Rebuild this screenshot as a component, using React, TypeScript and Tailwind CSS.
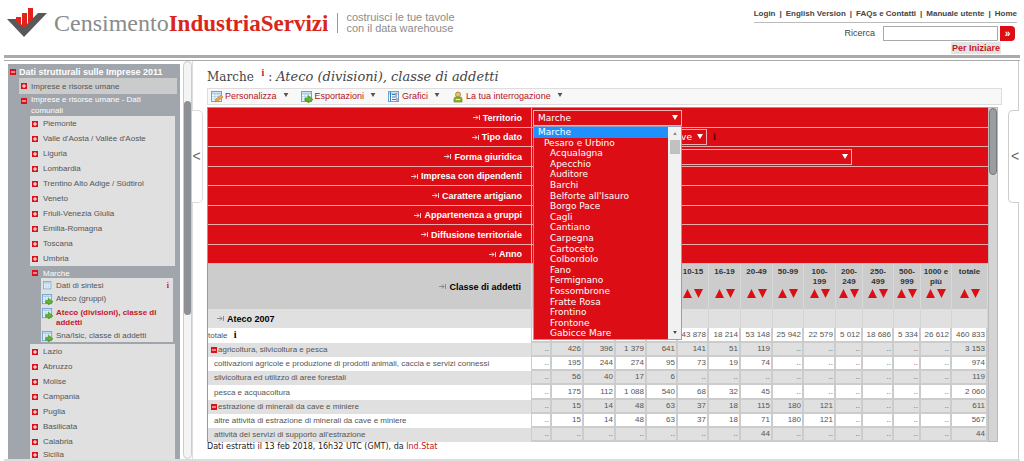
import type { ReactNode } from 'react'

const topLinks = ['Login', 'English Version', 'FAQs e Contatti', 'Manuale utente', 'Home']

const regionsBefore = [
  'Piemonte',
  "Valle d'Aosta / Vallée d'Aoste",
  'Liguria',
  'Lombardia',
  'Trentino Alto Adige / Südtirol',
  'Veneto',
  'Friuli-Venezia Giulia',
  'Emilia-Romagna',
  'Toscana',
  'Umbria',
]

const regionsAfter = ['Lazio', 'Abruzzo', 'Molise', 'Campania', 'Puglia', 'Basilicata', 'Calabria', 'Sicilia']

const municipalities = [
  'Acqualagna',
  'Apecchio',
  'Auditore',
  'Barchi',
  "Belforte all'Isauro",
  'Borgo Pace',
  'Cagli',
  'Cantiano',
  'Carpegna',
  'Cartoceto',
  'Colbordolo',
  'Fano',
  'Fermignano',
  'Fossombrone',
  'Fratte Rosa',
  'Frontino',
  'Frontone',
  'Gabicce Mare',
]

const otherFilters = ['Impresa con dipendenti', 'Carattere artigiano', 'Appartenenza a gruppi', 'Diffusione territoriale', 'Anno']

const sizeClasses = ['', '', '', '', '', '10-15', '16-19', '20-49', '50-99', '100-199', '200-249', '250-499', '500-999', '1000 e più', 'totale']

const rows = [
  {
    label: 'agricoltura, silvicoltura e pesca',
    group: true,
    values: ['..', '426', '396', '1 379', '641', '141', '51', '119', '..', '..', '..', '..', '..', '..', '3 153'],
  },
  {
    label: 'coltivazioni agricole e produzione di prodotti animali, caccia e servizi connessi',
    values: ['..', '195', '244', '274', '95', '73', '19', '74', '..', '..', '..', '..', '..', '..', '974'],
  },
  {
    label: 'silvicoltura ed utilizzo di aree forestali',
    values: ['..', '56', '40', '17', '6', '..', '..', '..', '..', '..', '..', '..', '..', '..', '119'],
  },
  {
    label: 'pesca e acquacoltura',
    values: ['..', '175', '112', '1 088', '540', '68', '32', '45', '..', '..', '..', '..', '..', '..', '2 060'],
  },
  {
    label: 'estrazione di minerali da cave e miniere',
    group: true,
    values: ['..', '15', '14', '48', '63', '37', '18', '115', '180', '121', '..', '..', '..', '..', '611'],
  },
  {
    label: 'altre attività di estrazione di minerali da cave e miniere',
    values: ['..', '15', '14', '48', '63', '37', '18', '71', '180', '121', '..', '..', '..', '..', '567'],
  },
  {
    label: "attività dei servizi di supporto all'estrazione",
    values: ['..', '..', '..', '..', '..', '..', '..', '44', '..', '..', '..', '..', '..', '..', '44'],
  },
]

const totals = ['', '', '', '', '', '43 878', '18 214', '53 148', '25 942', '22 579', '5 012', '18 686', '5 334', '26 612', '460 833']

function Toggle({ open = false }: { open?: boolean }) {
  return (
    <svg viewBox="0 0 6 6" className="h-[6px] w-[6px] shrink-0">
      <rect width="6" height="6" fill="#d8131c" />
      <path d={open ? 'M1 3h4' : 'M1 3h4M3 1v4'} stroke="#fff" strokeWidth="1" />
    </svg>
  )
}

function TableIcon({ kind }: { kind: 'plain' | 'arrow' | 'edit' | 'chart' }) {
  return (
    <svg viewBox="0 0 12 12" className="h-full w-full">
      <rect x="0.5" y="0.5" width="10" height="10" fill="#f2f9fd" stroke="#6fa3cd" />
      <path d="M1 2.5h9" stroke="#a9cfe9" strokeWidth="2" />
      {kind !== 'chart' && <path d="M1 5.5h9M1 8h9M4 2v8M7 2v8" stroke="#a8cbe4" strokeWidth="0.7" />}
      {kind === 'arrow' && <path d="M4 7h3V4.500l5 4-5 3.500V10H4z" fill="#63b52c" stroke="#37801a" strokeWidth="0.6" />}
      {kind === 'edit' && <path d="M4 11l1-3 5-4 2 2-5 4z" fill="#f0a848" stroke="#b47a35" strokeWidth="0.6" />}
      {kind === 'chart' && (
        <>
          <path d="M2.500 1v9" stroke="#337db5" strokeWidth="1" />
          <path d="M4 3.500h3M4 6h5M4 8.500h4" stroke="#337db5" strokeWidth="1.200" />
          <path d="M8 2v3M9 7v3" stroke="#d8434a" strokeWidth="1" />
        </>
      )}
    </svg>
  )
}

function UserIcon() {
  return (
    <svg viewBox="0 0 10 12" className="h-full w-full">
      <path d="M1 11V8q0-2 2-2h4q2 0 2 2v3z" fill="#8cb52c" stroke="#64851d" strokeWidth="0.7" />
      <circle cx="5" cy="3.500" r="2.500" fill="#e9bf70" stroke="#93702d" strokeWidth="0.7" />
      <path d="M3 8.500h4" stroke="#e5f0b9" strokeWidth="1" />
    </svg>
  )
}

function DimIcon({ dark = false }: { dark?: boolean }) {
  return (
    <svg viewBox="0 0 7 5" className={`h-[5px] w-[7px] ${dark ? 'text-[#777]' : 'text-white'}`}>
      <path d="M0 2.500h5M3 0.500l2 2-2 2M6.500 0v5" fill="none" stroke="currentColor" strokeWidth="0.800" />
    </svg>
  )
}

function SortArrows() {
  return (
    <svg viewBox="0 0 20 9" className="mx-auto h-[9px] w-[20px]">
      <path d="M0 9h9L4.500 0z" fill="#dc0d15" />
      <path d="M11 0h9l-4.500 9z" fill="#dc0d15" />
    </svg>
  )
}

function Down({ className }: { className: string }) {
  return (
    <svg viewBox="0 0 6 5" className={className}>
      <path d="M0 0h6L3 5z" fill="currentColor" />
    </svg>
  )
}

function Region({ name }: { name: string }) {
  return (
    <li className="flex h-[15px] items-center gap-[5px] bg-[#e0e0e0] pl-[2px] last:h-[12px] last:leading-[8px]">
      <Toggle />
      <a href="#" className="whitespace-nowrap">{name}</a>
    </li>
  )
}

function TreeLeaf({ kind, active = false, children }: { kind: 'plain' | 'arrow'; active?: boolean; children: ReactNode }) {
  return (
    <li className="flex gap-[3px] pl-[1px]">
      <span className={kind === 'plain' ? 'ml-px mr-px h-[9px] w-[9px] shrink-0' : 'h-[11px] w-[11px] shrink-0'}>
        <TableIcon kind={kind} />
      </span>
      <a href="#" className={`flex-1 leading-[10px] ${active ? 'font-bold text-[#c4161e]' : ''}`}>{children}</a>
    </li>
  )
}

function Sidebar() {
  return (
    <nav className="ml-2 mt-[3px] w-[172px] shrink-0 overflow-hidden bg-[#a0a6ab] text-[8px] leading-[11px] text-[#555]">
      <div className="flex h-[14px] items-center gap-[3px] pl-[2px] pt-[2px] text-[9px] font-bold text-white">
        <Toggle open />
        <a href="#" className="whitespace-nowrap">Dati strutturali sulle Imprese 2011</a>
      </div>
      <div className="ml-[11px] mr-[3px] flex h-[16px] items-center gap-1 bg-[#cacbcb] pl-[2px]">
        <Toggle />
        <a href="#">Imprese e risorse umane</a>
      </div>
      <div className="ml-[13px] flex h-[22px] gap-1 text-white">
        <span className="flex pt-1">
          <Toggle open />
        </span>
        <a href="#" className="mr-[30px] leading-[11px]">Imprese e risorse umane - Dati comunali</a>
      </div>
      <ul className="ml-[22px] mr-[5px]">
        {regionsBefore.map((name) => (
          <Region key={name} name={name} />
        ))}
        <li>
          <div className="flex h-[12px] items-center gap-[5px] pl-[2px] pt-[2px] text-white">
            <Toggle open />
            <a href="#">Marche</a>
          </div>
          <ul className="mb-[2px] ml-[11px] mr-[2px] flex h-[64px] flex-col gap-[3px] bg-[#e0e0e0] pt-[2px]">
            <li className="flex items-center pr-1">
              <ul className="flex-1">
                <TreeLeaf kind="plain">Dati di sintesi</TreeLeaf>
              </ul>
              <b className="font-['Liberation_Serif',serif] text-[#c4161e]">i</b>
            </li>
            <TreeLeaf kind="arrow">Ateco (gruppi)</TreeLeaf>
            <TreeLeaf kind="arrow" active>Ateco (divisioni), classe di addetti</TreeLeaf>
            <TreeLeaf kind="arrow">Sna/Isic, classe di addetti</TreeLeaf>
          </ul>
        </li>
        {regionsAfter.map((name) => (
          <Region key={name} name={name} />
        ))}
      </ul>
    </nav>
  )
}

function Header() {
  return (
    <header className="mx-1 flex h-[61px] shrink-0 items-start justify-between border-b border-[#aaa]">
      <div className="flex h-[60px] flex-1 items-start justify-between border-b border-white">
        <div className="flex h-[58px] flex-1 items-start justify-between border-b-[3px] border-[#aaa]">
          <div className="flex pt-[7px]">
            <svg viewBox="0 0 40 31" className="ml-[3px] h-[31px] w-[40px]">
              <path d="M0 12h9l8 8L31 6h9L17 30z" fill="#58585a" />
              <path d="M9 10h5v9l-5-5zM15 6h5v12l-3 3-2-2zM21 1h5v11l-5 5z" fill="#e2231a" />
            </svg>
            <div className="ml-[7px] mt-[1px] whitespace-nowrap font-['Liberation_Serif',serif] text-[24px] leading-[30px] text-[#8b8b8b]">
              Censimento<b className="text-[23px] text-[#d9261c]">IndustriaServizi</b>
            </div>
            <div className="ml-[9px] mt-[6px] h-[20px] border-l border-[#999]" />
            <p className="ml-[8px] mt-[5px] whitespace-nowrap text-[11px] leading-[11px] text-[#8d8d8d]">
              costruisci le tue tavole
              <br />
              con il data warehouse
            </p>
          </div>
          <div className="mr-[3px] flex flex-col items-end pt-[8px] text-[#444]">
            <div className="flex border-b border-[#bbb] pb-[2px] text-[8px] font-bold leading-[12px]">
              {topLinks.map((link, i) => (
                <span key={link} className="whitespace-nowrap">
                  {i > 0 && <span className="px-[4px]">|</span>}
                  <a href="#">{link}</a>
                </span>
              ))}
            </div>
            <form className="mt-[3px] flex h-[15px] items-center">
              <label htmlFor="search" className="mr-2 text-[9px]">Ricerca</label>
              <input id="search" className="h-[15px] w-[115px] border border-[#aaa] bg-white px-1 text-[9px]" />
              <button type="button" className="ml-[2px] mr-[2px] h-[15px] w-[15px] rounded-r-[4px] bg-[#dc0d15] text-[10px] font-bold leading-[12px] text-white">»</button>
            </form>
            <a href="#" className="mr-4 mt-px h-[12px] bg-[#e4e4e4] px-px text-[9px] font-bold leading-[12px] text-[#c4161e]">Per Iniziare</a>
          </div>
        </div>
      </div>
    </header>
  )
}

function ToolbarButton({ label, icon }: { label: string; icon: ReactNode }) {
  return (
    <button type="button" className="flex items-center gap-[2px] whitespace-nowrap">
      <span className="h-[12px] w-[12px]">{icon}</span>
      {label}
      <Down className="mb-1 ml-1 h-[4px] w-[6px] text-[#555]" />
    </button>
  )
}

function FilterSelect({ id, value, className, alignEnd = false }: { id: string; value: string; className: string; alignEnd?: boolean }) {
  return (
    <div className={`relative ${className}`}>
      <select
        id={id}
        className={`block h-[16px] w-full appearance-none border border-[#f3b0b2] bg-[#dc0d15] pl-1 pr-[14px] font-['DejaVu_Sans',sans-serif] text-[9px] leading-[14px] text-white ${alignEnd ? '[text-align-last:right]' : ''}`}
      >
        <option>{value}</option>
      </select>
      <Down className="pointer-events-none absolute right-1 top-[5px] h-[5px] w-[6px] text-white" />
    </div>
  )
}

function TerritoryList() {
  return (
    <div className="absolute left-px top-[18px] z-10 flex h-[214px] w-[149px] border border-[#8f9fc4] bg-[#dc0d15] font-['DejaVu_Sans',sans-serif] text-[9px] leading-[10px] text-white">
      <ul role="listbox" aria-label="Territorio" className="grid flex-1 auto-rows-fr whitespace-nowrap">
        <li role="option" aria-selected="true" className="bg-[#1e90ff] pl-1">Marche</li>
        <li role="option" aria-selected="false" className="pl-[10px]">Pesaro e Urbino</li>
        {municipalities.map((name) => (
          <li key={name} role="option" aria-selected="false" className="pl-4">{name}</li>
        ))}
      </ul>
      <div className="flex w-[13px] flex-col items-center bg-[#f1f1f1] py-[5px] text-[#8a8a8a]">
        <Down className="h-[3px] w-[6px] rotate-180" />
        <div className="mt-[5px] h-[14px] w-[10px] bg-[#c1c1c1]" />
        <Down className="mt-auto h-[3px] w-[6px] text-[#444]" />
      </div>
    </div>
  )
}

function FilterRow({ label, htmlFor, tall, children }: { label: string; htmlFor?: string; tall: boolean; children?: ReactNode }) {
  return (
    <tr className={`bg-[#dc0d15] text-white ${tall ? 'h-[20px]' : 'h-[19px]'}`}>
      <th scope="row" className="border-b border-r border-[#efaaaa] pr-[9px] text-[9px] leading-[12px]">
        <label htmlFor={htmlFor} className="flex items-center justify-end gap-[3px]">
          <DimIcon />
          {label}
        </label>
      </th>
      <td colSpan={15} className="relative border-b border-[#efaaaa] text-left">
        {children}
      </td>
    </tr>
  )
}

function DataTable() {
  return (
    <table className="w-full table-fixed border-separate border-spacing-0 border-l border-t border-[#999] text-[8px] leading-[10px] text-[#555]">
      <colgroup>
        <col />
        <col className="w-[20px]" />
        <col className="w-[32px]" />
        <col className="w-[32px]" />
        <col className="w-[31px]" />
        <col className="w-[31px]" />
        <col className="w-[31px]" />
        <col className="w-[32px]" />
        <col className="w-[32px]" />
        <col className="w-[31px]" />
        <col className="w-[32px]" />
        <col className="w-[27px]" />
        <col className="w-[31px]" />
        <col className="w-[27px]" />
        <col className="w-[31px]" />
        <col className="w-[36px]" />
      </colgroup>
      <thead>
        <FilterRow label="Territorio" htmlFor="territorio" tall>
          <FilterSelect id="territorio" value="Marche" className="ml-px w-[149px]" />
          <TerritoryList />
        </FilterRow>
        <FilterRow label="Tipo dato" htmlFor="tipo" tall={false}>
          <div className="flex items-center">
            <FilterSelect id="tipo" value="numero imprese attive" className="ml-px w-[174px]" alignEnd />
            <b className="ml-[6px] font-['Liberation_Serif',serif] text-[10px] text-[#4b0507]">i</b>
          </div>
        </FilterRow>
        <FilterRow label="Forma giuridica" htmlFor="forma" tall>
          <FilterSelect id="forma" value="totale" className="ml-px w-[319px]" />
        </FilterRow>
        {otherFilters.map((label, i) => (
          <FilterRow key={label} label={label} tall={i % 2 === 1} />
        ))}
        <tr className="h-[45px] bg-[#ccc] text-[#333]">
          <th scope="col" className="border-r border-[#ddd] pr-[10px] text-[9px] text-black">
            <span className="flex items-center justify-end gap-[3px]">
              <DimIcon dark />
              Classe di addetti
            </span>
          </th>
          {sizeClasses.map((label, i) => (
            <th key={i} scope="col" className="border-r border-[#d8d8d8] pt-[3px] align-top leading-[10px]">
              <div className="h-[22px] px-[2px]">{label}</div>
              {label && <SortArrows />}
            </th>
          ))}
        </tr>
        <tr className="h-[19px] bg-[#e0e0e0]">
          <th scope="col" className="border-r border-[#d0d0d0] pl-[9px] text-[9px] text-black">
            <span className="flex items-center gap-[3px]">
              <DimIcon dark />
              Ateco 2007
            </span>
          </th>
          {sizeClasses.map((_, i) => (
            <td key={i} className="border-r border-[#d4d4d4]" />
          ))}
        </tr>
      </thead>
      <tbody>
        <tr className="h-[15px] bg-white">
          <th scope="row" className="border-r border-[#ccc] text-left font-normal">
            totale <b className="ml-1 font-['Liberation_Serif',serif] text-[10px] text-black">i</b>
          </th>
          {totals.map((value, i) => (
            <td key={i} className="whitespace-nowrap border-b-2 border-r-2 border-[#ccc] pr-px text-right">{value}</td>
          ))}
        </tr>
        {rows.map((row, i) => (
          <tr key={row.label} className={`${i === 3 ? 'h-[15px]' : 'h-[14px]'} ${i % 2 ? 'bg-white' : 'bg-[#e0e0e0]'}`}>
            <th scope="row" className="border-r border-[#ccc] text-left font-normal">
              <span className={`flex items-center gap-px whitespace-nowrap ${row.group ? 'pl-[3px]' : 'pl-[6px]'}`}>
                {row.group && <Toggle open />}
                {row.label}
              </span>
            </th>
            {row.values.map((value, j) => (
              <td key={j} className="whitespace-nowrap border-b-2 border-r-2 border-[#ccc] pr-px text-right">{value}</td>
            ))}
          </tr>
        ))}
      </tbody>
    </table>
  )
}

export default function App() {
  return (
    <div className="flex h-screen flex-col overflow-hidden bg-white font-['Liberation_Sans',Arial,sans-serif]">
      <Header />

      <div className="mx-1 flex min-h-0 flex-1 border-b-2 border-[#ddd] pr-px">
        <div className="-ml-1 flex">
          <Sidebar />
        </div>
        <div className="ml-[3px] w-[9px] shrink-0 rounded-[5px] border border-[#ccc] bg-[#f4f4f4] pt-[39px]">
          <div className="h-[214px] rounded-[5px] bg-[#8d9195]" />
        </div>

        <div className="w-[10px] shrink-0 border-l border-[#ddd] pt-[49px]">
          <button type="button" className="-ml-px h-[93px] w-[11px] rounded-r-[5px] border border-l-0 border-[#ddd] bg-white pr-px text-[14px] text-[#666]">&lt;</button>
        </div>

        <main className="ml-[5px] min-w-0 flex-1 pt-[7px]">
          <h1 className="flex h-[20px] items-start whitespace-pre font-['DejaVu_Serif',serif] text-[12px] leading-[18px] text-[#444]">
            Marche <b className="ml-1 mr-1 font-['Liberation_Serif',serif] text-[10px] leading-[10px] text-[#c4161e]">i</b>: <i className="text-[13px]">Ateco (divisioni), classe di addetti</i>
          </h1>
          <div className="mr-[2px] flex h-[17px] items-center gap-[12px] border border-[#ddd] bg-[#f8f8f8] pl-[3px] text-[9px] text-[#b5121b]">
            <ToolbarButton label="Personalizza" icon={<TableIcon kind="edit" />} />
            <ToolbarButton label="Esportazioni" icon={<TableIcon kind="arrow" />} />
            <ToolbarButton label="Grafici" icon={<TableIcon kind="chart" />} />
            <ToolbarButton label="La tua interrogazione" icon={<UserIcon />} />
          </div>
          <div className="mr-[6px] mt-[2px] flex">
            <div className="min-w-0 flex-1">
              <DataTable />
            </div>
            <div className="w-[10px] shrink-0 border border-[#bbb] bg-[#d4d4d4]">
              <div className="h-[67px] rounded-[4px] border border-[#777] bg-[#9a9ea1]" />
            </div>
          </div>
          <p className="whitespace-nowrap font-['DejaVu_Sans',sans-serif] text-[8px] leading-[10px] text-[#222]">
            Dati estratti il 13 feb 2018, 16h32 UTC (GMT), da <a href="#" className="text-[#c4161e]">Ind.Stat</a>
          </p>
        </main>

        <div className="ml-[4px] w-[11px] shrink-0 border-r border-[#ccc] pt-[49px]">
          <button type="button" className="h-[93px] w-[11px] rounded-l-[5px] border border-r-0 border-[#ccc] bg-white pl-[2px] text-[14px] text-[#666]">&lt;</button>
        </div>
      </div>
    </div>
  )
}
